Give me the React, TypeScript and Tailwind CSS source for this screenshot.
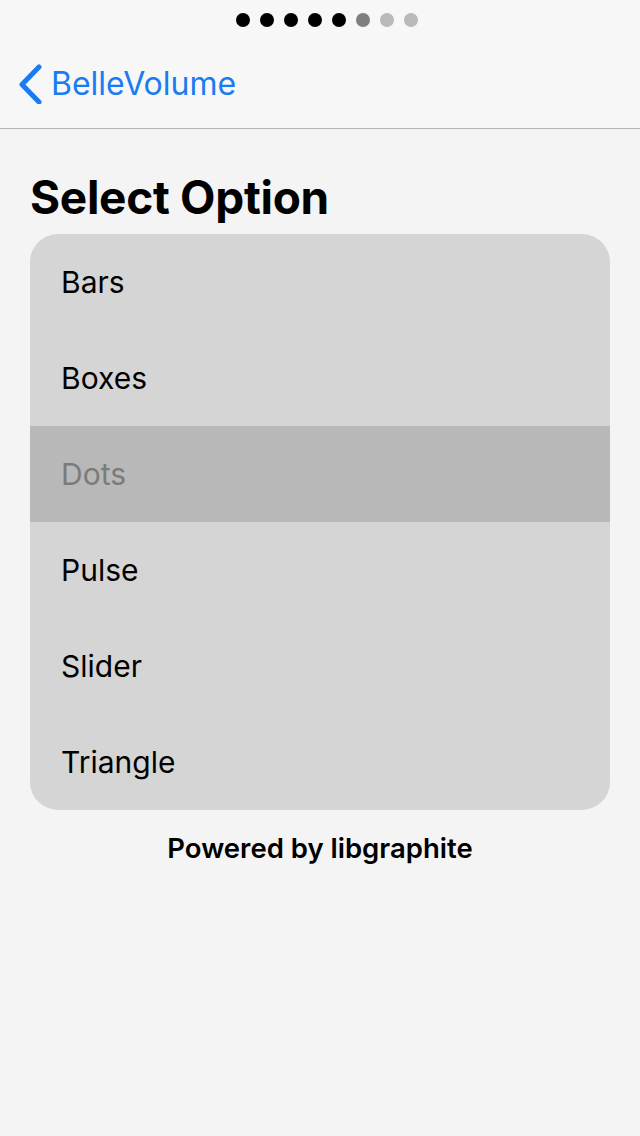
import { useState } from "react";

const options = ["Bars", "Boxes", "Dots", "Pulse", "Slider", "Triangle"];
const dots = ["bg-black", "bg-black", "bg-black", "bg-black", "bg-black", "bg-[#7f7f7f]", "bg-[#b9b9b9]", "bg-[#b9b9b9]"];

export default function App() {
  const [selected, setSelected] = useState("Dots");

  return (
    <div className="w-[640px] min-h-[1136px] bg-[#f4f4f4] font-['Inter',sans-serif]">
      <div className="h-[129px] bg-[#f7f7f7] border-b border-[#b3b3b3] flex flex-col">
        <div className="flex justify-center gap-[10px] pt-[13px] pl-[14px]">
          {dots.map((c, i) => (
            <span key={i} className={`w-[14px] h-[14px] rounded-full ${c}`} />
          ))}
        </div>
        <button type="button" className="flex items-center mt-[37px] ml-[15px] text-[#1a7cf0]">
          <svg width="28" height="40" viewBox="0 0 28 40" fill="none">
            <path d="M24 3 L7 20.5 L24 38" stroke="currentColor" strokeWidth="5" strokeLinecap="round" strokeLinejoin="round" />
          </svg>
          <span className="ml-[8px] text-[32px] leading-none">BelleVolume</span>
        </button>
      </div>

      <div className="px-[30px]">
        <h1 className="mt-[40px] text-[46px] leading-[56px] font-bold text-black tracking-[-0.3px]">Select Option</h1>
        <div className="mt-[9px] rounded-[28px] bg-[#d5d5d5] overflow-hidden">
          {options.map((item) => (
            <div
              key={item}
              onClick={() => setSelected(item)}
              className={
                item === selected
                  ? "h-[96px] flex items-center pl-[31px] bg-[#b8b8b8] text-[#7b7b7b] text-[30px]"
                  : "h-[96px] flex items-center pl-[31px] text-black text-[30px]"
              }
            >
              {item}
            </div>
          ))}
        </div>
        <p className="mt-[18px] text-center text-[27.5px] leading-[40px] font-semibold text-black">Powered by libgraphite</p>
      </div>
    </div>
  );
}
